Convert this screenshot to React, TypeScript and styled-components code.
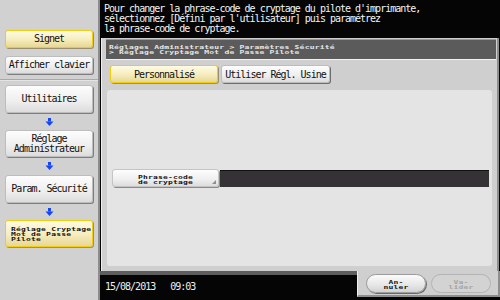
import React from "react";
import styled, { createGlobalStyle, css } from "styled-components";

const GlobalStyle = createGlobalStyle`
  html, body {
    margin: 0;
    padding: 0;
    background: #000;
  }
  * {
    box-sizing: border-box;
  }
`;

const mono = `"DejaVu Sans Mono", "Liberation Mono", monospace`;

const Screen = styled.div`
  width: 500px;
  height: 300px;
  display: flex;
  background: #050505;
  font-family: ${mono};
  overflow: hidden;
`;

const Sidebar = styled.div`
  width: 100px;
  height: 300px;
  background: #d1d1d1;
  border-right: 2px solid #8c8c8c;
  display: flex;
  flex-direction: column;
`;

const TopGroup = styled.div`
  height: 80px;
  padding: 30px 5px 0 5px;
  display: flex;
  flex-direction: column;
  gap: 8px;
  border-bottom: 1px solid #a9a9a9;
  box-shadow: 0 1px 0 #e4e4e4;
`;

const FlowGroup = styled.div`
  padding: 5px 5px 0 5px;
  display: flex;
  flex-direction: column;
`;

const yellow = css`
  background: linear-gradient(180deg, #fffbe4 0%, #f6ecbd 55%, #e7d894 100%);
  border: 1px solid #f2cc10;
  box-shadow: 1px 1px 0 #9a9070;
`;

const SideButton = styled.div<{ $active?: boolean; $h: number }>`
  height: ${({ $h }) => $h}px;
  border-radius: 3px;
  display: flex;
  align-items: center;
  justify-content: center;
  text-align: center;
  font-size: 10px;
  line-height: 10px;
  letter-spacing: -1px;
  color: #111;
  background: linear-gradient(180deg, #fdfdfd 0%, #eeeeee 60%, #dcdcdc 100%);
  border: 1px solid #bdbdbd;
  box-shadow: 1px 1px 0 #7d7d7d;
  ${({ $active }) => $active && yellow}
`;

const SmallText = styled.span<{ $color?: string; $align?: string }>`
  display: block;
  font-size: 8px;
  font-weight: bold;
  line-height: 7px;
  letter-spacing: 0.2px;
  white-space: pre;
  text-align: ${({ $align }) => $align || "center"};
  color: ${({ $color }) => $color || "#111"};
  transform: scaleY(0.72);
`;

const CurrentStep = styled.div`
  height: 27px;
  border-radius: 3px;
  padding: 3px 0 0 5px;
  ${yellow}
`;

const ArrowRow = styled.div<{ $h: number }>`
  height: ${({ $h }) => $h}px;
  display: flex;
  align-items: center;
  justify-content: center;
`;

const DownArrow = () => (
  <svg width="9" height="8" viewBox="0 0 9 8">
    <rect x="3" y="0" width="3" height="3.5" fill="#1546f0" />
    <polygon points="0.5,3.5 8.5,3.5 4.5,8" fill="#1546f0" />
  </svg>
);

const Main = styled.div`
  flex: 1;
  display: flex;
  flex-direction: column;
`;

const Header = styled.div`
  height: 38px;
  padding: 4px 0 0 4px;
  color: #f4f4f4;
  font-size: 10px;
  line-height: 10px;
  letter-spacing: -1px;
  white-space: pre;
`;

const Frame = styled.div`
  height: 233px;
  margin-left: 1px;
  width: 398px;
  background: #cfcfcf;
  border-left: 1px solid #efefef;
  border-right: 2px solid #8e8e8e;
  padding: 1px 1px 0 4px;
  display: flex;
  flex-direction: column;
`;

const Breadcrumb = styled.div`
  height: 21px;
  background: #5b5b5b;
  border-bottom: 1px solid #f2f2f2;
  border-top: 1px solid #9a9a9a;
  padding: 3px 0 0 3px;
`;

const TabRow = styled.div`
  display: flex;
  gap: 3px;
  padding: 5px 0 0 4px;
`;

const Tab = styled.div<{ $active?: boolean; $w: number }>`
  width: ${({ $w }) => $w}px;
  height: 18px;
  border-radius: 3px;
  display: flex;
  align-items: center;
  justify-content: center;
  font-size: 10px;
  letter-spacing: -1px;
  color: #111;
  background: linear-gradient(180deg, #fdfdfd 0%, #eeeeee 60%, #dcdcdc 100%);
  border: 1px solid #bdbdbd;
  box-shadow: 1px 1px 0 #6d6d6d;
  ${({ $active }) => $active && yellow}
`;

const Content = styled.div`
  margin: 7px 4px 0 1px;
  height: 176px;
  background: #e4e4e4;
  border-radius: 3px;
  display: flex;
  align-items: center;
  padding: 0 3px 0 5px;
`;

const FieldButton = styled.div`
  position: relative;
  width: 107px;
  height: 18px;
  border-radius: 3px;
  padding-top: 3px;
  background: linear-gradient(180deg, #fdfdfd 0%, #efefef 60%, #dddddd 100%);
  border: 1px solid #c4c4c4;
  box-shadow: 1px 1px 0 #8a8a8a;
  &::after {
    content: "";
    position: absolute;
    right: 2px;
    bottom: 2px;
    border-left: 4px solid transparent;
    border-bottom: 4px solid #8e8e8e;
  }
`;

const FieldValue = styled.div`
  flex: 1;
  height: 17px;
  margin-left: 1px;
  background: #343234;
  border-top: 1px solid #111;
`;

const Bottom = styled.div`
  flex: 1;
  display: flex;
`;

const DateBar = styled.div`
  flex: 1;
  border-top: 4px solid #5e5e5e;
  display: flex;
  align-items: center;
  gap: 15px;
  padding: 0 0 2px 5px;
  color: #f0f0f0;
  font-size: 10px;
  letter-spacing: -1px;
`;

const ButtonTab = styled.div`
  width: 143px;
  height: 26px;
  background: #cfcfcf;
  border-right: 2px solid #8e8e8e;
  border-bottom: 2px solid #8e8e8e;
  border-left: 1px solid #efefef;
  display: flex;
  gap: 5px;
  padding: 3px 0 0 8px;
`;

const PillButton = styled.div<{ $disabled?: boolean }>`
  width: 60px;
  height: 19px;
  border-radius: 10px;
  padding-top: 3px;
  background: ${({ $disabled }) =>
    $disabled ? "#d3d3d3" : "linear-gradient(180deg, #fbfbfb 0%, #e6e6e6 60%, #d2d2d2 100%)"};
  border: 1px solid ${({ $disabled }) => ($disabled ? "#b4b4b4" : "#9c9c9c")};
  box-shadow: ${({ $disabled }) => ($disabled ? "none" : "1px 1px 0 #6a6a6a")};
`;

const sideFlow = [
  { label: "Utilitaires", h: 28, arrow: 17 },
  { label: "Réglage\nAdministrateur", h: 27, arrow: 18 },
  { label: "Param. Sécurité", h: 28, arrow: 17 },
];

export default function App() {
  return (
    <>
      <GlobalStyle />
      <Screen>
        <Sidebar>
          <TopGroup>
            <SideButton $active $h={18}>Signet</SideButton>
            <SideButton $h={18}>Afficher clavier</SideButton>
          </TopGroup>
          <FlowGroup>
            {sideFlow.map((s) => (
              <React.Fragment key={s.label}>
                <SideButton $h={s.h} style={{ whiteSpace: "pre" }}>
                  {s.label}
                </SideButton>
                <ArrowRow $h={s.arrow}>
                  <DownArrow />
                </ArrowRow>
              </React.Fragment>
            ))}
            <CurrentStep>
              <SmallText $align="left">{"Réglage Cryptage\nMot de Passe\nPilote"}</SmallText>
            </CurrentStep>
          </FlowGroup>
        </Sidebar>
        <Main>
          <Header>
            {"Pour changer la phrase-code de cryptage du pilote d'imprimante,\nsélectionnez [Défini par l'utilisateur] puis paramétrez\nla phrase-code de cryptage."}
          </Header>
          <Frame>
            <Breadcrumb>
              <SmallText $color="#e8e8e8" $align="left">
                {"Réglages Administrateur > Paramètres Sécurité\n> Réglage Cryptage Mot de Passe Pilote"}
              </SmallText>
            </Breadcrumb>
            <TabRow>
              <Tab $active $w={108}>Personnalisé</Tab>
              <Tab $w={109}>Utiliser Régl. Usine</Tab>
            </TabRow>
            <Content>
              <FieldButton>
                <SmallText>{"Phrase-code\nde cryptage"}</SmallText>
              </FieldButton>
              <FieldValue />
            </Content>
          </Frame>
          <Bottom>
            <DateBar>
              <span>15/08/2013</span>
              <span>09:03</span>
            </DateBar>
            <ButtonTab>
              <PillButton>
                <SmallText>{"An-\nnuler"}</SmallText>
              </PillButton>
              <PillButton $disabled>
                <SmallText $color="#a4a4a4">{"Va-\nlider"}</SmallText>
              </PillButton>
            </ButtonTab>
          </Bottom>
        </Main>
      </Screen>
    </>
  );
}
